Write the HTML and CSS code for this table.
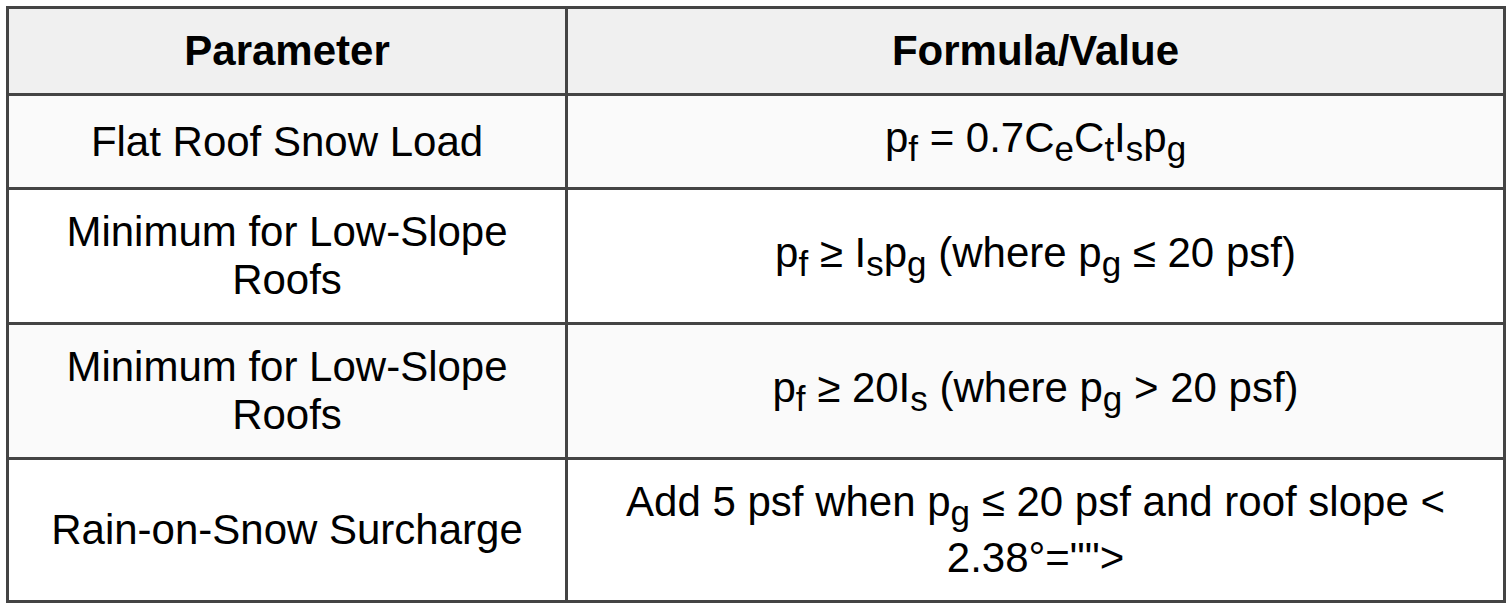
FILE: index.html
```html
<!DOCTYPE html>
<html>
<head>
<meta charset="utf-8">
<link rel="stylesheet" href="styles.css">
</head>
<body>
<div class="table">
  <div class="cell head"><span class="txt">Parameter</span></div>
  <div class="cell head"><span class="txt">Formula/Value</span></div>

  <div class="cell odd"><span class="txt">Flat Roof Snow Load</span></div>
  <div class="cell odd"><span class="txt">p<sub>f</sub> = 0.7C<sub>e</sub>C<sub>t</sub>I<sub>s</sub>p<sub>g</sub></span></div>

  <div class="cell"><span class="txt">Minimum for Low-Slope Roofs</span></div>
  <div class="cell"><span class="txt">p<sub>f</sub> ≥ I<sub>s</sub>p<sub>g</sub> (where p<sub>g</sub> ≤ 20 psf)</span></div>

  <div class="cell odd"><span class="txt">Minimum for Low-Slope Roofs</span></div>
  <div class="cell odd"><span class="txt">p<sub>f</sub> ≥ 20I<sub>s</sub> (where p<sub>g</sub> &gt; 20 psf)</span></div>

  <div class="cell"><span class="txt">Rain-on-Snow Surcharge</span></div>
  <div class="cell"><span class="txt">Add 5 psf when p<sub>g</sub> ≤ 20 psf and roof slope &lt; 2.38°=""&gt;</span></div>
</div>
</body>
</html>
```

FILE: styles.css
```css
html, body {
  background: #ffffff;
}
body {
  margin: 6px;
  font-family: "Liberation Sans", Arial, sans-serif;
  font-size: 42px;
  color: #000000;
}
.table {
  display: grid;
  grid-template-columns: 556px 935px;
  gap: 3px;
  padding: 3px;
  background: #444444;
  width: max-content;
}
.cell {
  background: #ffffff;
  padding: 18px 12px;
  text-align: center;
  display: flex;
  align-items: center;
  justify-content: center;
  line-height: normal;
}
.txt {
  display: block;
}
.cell.odd {
  background: #fafafa;
}
.cell.head {
  background: #f0f0f0;
  font-weight: bold;
}
sub {
  font-size: smaller;
  vertical-align: sub;
  line-height: normal;
}
```
